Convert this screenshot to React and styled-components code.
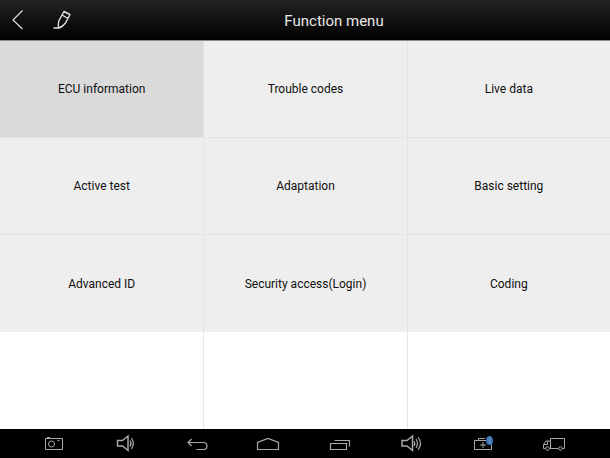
import React from "react";
import styled, { createGlobalStyle } from "styled-components";

const functions = [
  { id: 1, name: "ECU information" },
  { id: 2, name: "Trouble codes" },
  { id: 3, name: "Live data" },
  { id: 4, name: "Active test" },
  { id: 5, name: "Adaptation" },
  { id: 6, name: "Basic setting" },
  { id: 7, name: "Advanced ID" },
  { id: 8, name: "Security access(Login)" },
  { id: 9, name: "Coding" },
];

const navItems = [
  {
    label: "Screenshot",
    icon: (
      <>
        <path d="M5.5 5.5h17v11h-17zM7 4.5h3M17.5 7.5h2" />
        <circle cx="11.5" cy="11" r="3" />
      </>
    ),
  },
  {
    label: "Volume down",
    icon: (
      <>
        <path d="M6.5 7.5h5l5.5-4.5v14.5l-5.5-4.5h-5z" strokeWidth="1.5" />
        <path d="M19 7.5q2 3 0 6M20.500 5q3.500 5.500 0 11" strokeWidth="1.2" />
      </>
    ),
  },
  {
    label: "Back",
    icon: <path d="M8.5 6L5 9.5 8.5 13M5 9.5h15.500q3.500 0 3.500 3.500t-3.500 3.500h-7" strokeWidth="1.2" />,
  },
  {
    label: "Home",
    icon: <path d="M3.5 16.5v-7l10.500-4 10.500 4v7z" strokeWidth="1.2" />,
  },
  {
    label: "Recent apps",
    icon: <path d="M4.5 10.5h16v6h-16zM8.5 7.5h15v6" strokeWidth="1.2" />,
  },
  {
    label: "Volume up",
    icon: (
      <>
        <path d="M5 7.5h5l5.500-4.5v14.5l-5.500-4.5H5z" strokeWidth="1.5" />
        <path d="M17 8q1.500 2.500 0 5M19 6q3 4.500 0 9M21 4q5 6.500 0 13" strokeWidth="1.2" />
      </>
    ),
  },
  {
    label: "Vehicle connector",
    icon: (
      <>
        <path d="M5.5 7.5h17v9h-17zM9.500 7V5.500H16M14 9v6M11 12h6" />
        <ellipse cx="20.5" cy="7.5" rx="3.5" ry="4.5" fill="#3973b5" stroke="none" />
        <path d="M19 6l3 3-1.500 1.500v-6L22 6l-3 3" stroke="#7fa8d4" strokeWidth="0.5" />
      </>
    ),
  },
  {
    label: "Diagnostics",
    icon: (
      <>
        <path d="M10.5 15.5v-10h14v10h-2M18.5 15.5h-9M5.5 15.5h-2v-4l2.500-3.500h4.500M4 11.5h3.500v-3" />
        <circle cx="7.5" cy="15.5" r="1.8" />
        <circle cx="20.5" cy="15.5" r="1.8" />
      </>
    ),
  },
];

const App = () => {
  const [selected, setSelected] = React.useState(1);

  return (
    <Screen>
      <GlobalStyle />
      <Header>
        <Actions>
          <IconButton aria-label="Back">
            <Icon width="12" height="20" viewBox="0 0 12 20" $color="#e0e0e0">
              <path d="M10.5 .5L1 10l9.5 9" strokeWidth="1.2" />
            </Icon>
          </IconButton>
          <IconButton aria-label="Edit">
            <Icon width="20" height="20" viewBox="0 0 20 20" $color="#e0e0e0">
              <path
                d="M1.5 18H7q4-1.500 6.500-5L18 4.500 12 1.500 7 10.500Q6 13 6.500 18M10 5l6 3.500"
                strokeWidth="1.4"
                strokeLinejoin="round"
              />
            </Icon>
          </IconButton>
        </Actions>
        <Title>Function menu</Title>
      </Header>
      <Menu>
        {functions.map((el) => (
          <Cell key={el.id} $active={el.id === selected} onClick={() => setSelected(el.id)}>
            {el.name}
          </Cell>
        ))}
        <EmptyCell />
        <EmptyCell />
        <EmptyCell />
      </Menu>
      <NavBar>
        {navItems.map((item) => (
          <NavButton key={item.label} aria-label={item.label}>
            <Icon width="28" height="21" viewBox="0 0 28 21" $color="#a8a8a8">
              {item.icon}
            </Icon>
          </NavButton>
        ))}
      </NavBar>
    </Screen>
  );
};

export default App;

const GlobalStyle = createGlobalStyle`
  * {
    box-sizing: border-box;
  }
  body {
    margin: 0;
    background-color: white;
    font-family: Roboto, "Liberation Sans", sans-serif;
  }
  button {
    padding: 0;
    border: none;
    background: none;
    font-family: inherit;
    cursor: pointer;
  }
`;

const Screen = styled.div`
  display: flex;
  flex-direction: column;
  min-height: 100vh;
`;

const Header = styled.header`
  display: grid;
  grid-template-columns: 1fr auto 1fr;
  align-items: center;
  height: 41px;
  padding: 0 12px;
  background: linear-gradient(#222222, #000000);
  border-bottom: 1px solid #8c8c8c;
`;

const Actions = styled.div`
  display: flex;
  gap: 28px;
`;

const IconButton = styled.button`
  display: flex;
`;

const Icon = styled.svg`
  display: block;
  fill: none;
  stroke: ${(props) => props.$color};
`;

const Title = styled.h1`
  margin: 0;
  padding-top: 2px;
  padding-left: 58px;
  color: #e8e8e8;
  font-size: 15px;
  font-weight: 400;
  line-height: 20px;
`;

const Menu = styled.main`
  display: grid;
  flex: 1;
  grid-template-columns: repeat(3, 1fr);
  grid-template-rows: repeat(4, 1fr);
`;

const Cell = styled.button`
  background-color: ${(props) => (props.$active ? "#dadada" : "#eeeeee")};
  color: #101010;
  font-size: 12px;
  line-height: 16px;
  border-left: 1px solid #e4e4e4;
  border-bottom: 1px solid #e4e4e4;
  &:nth-child(3n + 1) {
    border-left: none;
  }
  &:nth-child(n + 7) {
    border-bottom: none;
  }
`;

const EmptyCell = styled.div`
  border-left: 1px solid #e8e8e8;
  &:nth-child(3n + 1) {
    border-left: none;
  }
`;

const NavBar = styled.nav`
  display: flex;
  height: 29px;
  padding: 0 20px 0 18px;
  background-color: black;
`;

const NavButton = styled.button`
  display: flex;
  flex: 1;
  align-items: center;
  justify-content: center;
`;
